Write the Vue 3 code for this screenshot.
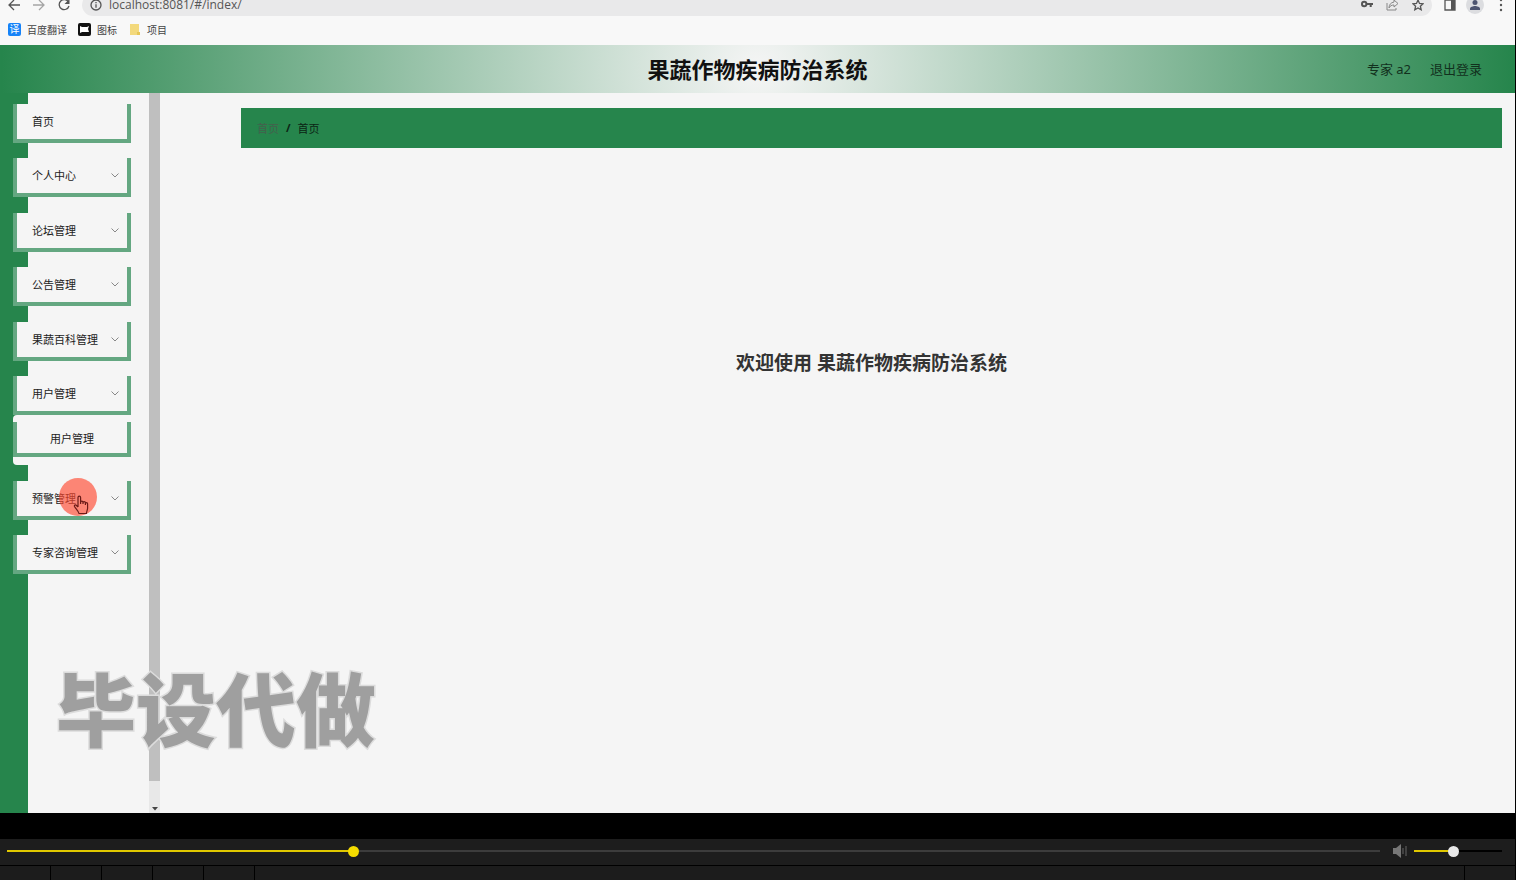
<template>
  <div class="screen">
    <div class="browser">
      <div class="toolbar">
        <button class="tool" aria-label="Back">
          <svg width="14" height="14" viewBox="0 0 14 14"><path d="M13 7H2M7 2L2 7l5 5" /></svg>
        </button>
        <button class="tool faded" aria-label="Forward">
          <svg width="14" height="14" viewBox="0 0 14 14"><path d="M1 7h11M7 2l5 5-5 5" /></svg>
        </button>
        <button class="tool" aria-label="Reload">
          <svg width="14" height="14" viewBox="0 0 14 14">
            <path d="M11.6 4.2A5 5 0 1 0 12 8" />
            <path class="fill" d="M12.5 1v5h-5z" />
          </svg>
        </button>
        <div class="address">
          <svg width="12" height="12" viewBox="0 0 12 12">
            <circle cx="6" cy="6" r="5" />
            <path d="M6 5.2v3.6M6 3v1.2" />
          </svg>
          <input v-model="url" type="text" aria-label="Address" />
          <svg width="12" height="12" viewBox="0 0 12 12">
            <circle class="thick" cx="3.2" cy="5" r="2.2" />
            <path class="thick" d="M5.5 5H12M9.7 5v3" />
          </svg>
          <svg class="light" width="13" height="12" viewBox="0 0 13 12">
            <path d="M1 4v7h9V9M8 1l4 3.5L8 8V6C5.5 6 4 7 3 9c0-3.5 2-5.5 5-6z" />
          </svg>
          <svg width="12" height="12" viewBox="0 0 12 12">
            <path d="M6 1l1.5 3.4 3.6.4-2.7 2.4.8 3.6L6 9l-3.2 1.8.8-3.6L.9 4.8l3.6-.4z" />
          </svg>
        </div>
        <div class="tool-end">
          <button class="tool" aria-label="Side panel">
            <svg width="12" height="12" viewBox="0 0 12 12">
              <path d="M1 1h10v10H1z" />
              <path class="fill" d="M7 1h4v10H7z" />
            </svg>
          </button>
          <button class="tool profile" aria-label="Profile">
            <svg width="12" height="12" viewBox="0 0 12 12">
              <circle class="fill" cx="6" cy="3.5" r="2.5" />
              <path class="fill" d="M1 11V9.5C1 8 4 7 6 7s5 1 5 2.5V11z" />
            </svg>
          </button>
          <button class="tool" aria-label="More">
            <svg width="14" height="14" viewBox="0 0 14 14">
              <circle class="fill" cx="7" cy="2" r="1.2" />
              <circle class="fill" cx="7" cy="7" r="1.2" />
              <circle class="fill" cx="7" cy="12" r="1.2" />
            </svg>
          </button>
        </div>
      </div>
      <div class="bookmarks">
        <a href="#"><span class="translate">译</span>百度翻译</a>
        <a href="#">
          <svg width="13" height="13" viewBox="0 0 13 13">
            <rect width="13" height="13" rx="2" fill="#111" />
            <path d="M2 3l2 1h5l2-1-1 3 1 3H4l-2 1z" fill="#fff" />
          </svg>图标
        </a>
        <a href="#">
          <svg width="13" height="13" viewBox="0 0 13 13">
            <path d="M2 1h9v8l1 3H2z" fill="#f3d97c" />
            <path d="M9 9h3v3H9z" fill="#e6c658" />
          </svg>项目
        </a>
      </div>
    </div>

    <div class="page">
      <header class="header">
        <h1>果蔬作物疾病防治系统</h1>
        <div class="user">
          <span>专家 a2</span>
          <button>退出登录</button>
        </div>
      </header>
      <div class="body">
        <nav class="sidebar">
          <ul class="menu">
            <li v-for="item in menus" :key="item.name">
              <button class="menu-item">
                {{ item.name }}
                <svg v-if="item.arrow" width="8" height="5" viewBox="0 0 8 5">
                  <path d="M.5.5L4 4 7.5.5" />
                </svg>
              </button>
              <div v-if="item.children" class="submenu">
                <a v-for="child in item.children" :key="child" href="#" class="submenu-item">{{ child }}</a>
              </div>
              <div v-if="item.hover" class="pointer">
                <svg width="16" height="20" viewBox="0 0 16 20">
                  <path d="M5 12V2.5a1.3 1.3 0 0 1 2.6 0V8M7.6 9V7.300a1.2 1.2 0 0 1 2.4 0V9M10 9V7.800a1.2 1.2 0 0 1 2.4 0V10M12.4 10V8.800a1.1 1.1 0 0 1 2.2 0V13c0 2-1 3-1.2 5.5H6C5.5 16 3 14 1.5 11.5 1 10 2.5 9.5 3.5 10.5L5 12" />
                </svg>
              </div>
            </li>
          </ul>
        </nav>
        <div class="scrollbar">
          <div class="thumb"></div>
          <svg width="6" height="4" viewBox="0 0 6 4"><path d="M0 0h6L3 3.5z" fill="#444" /></svg>
        </div>
        <main class="main">
          <div class="breadcrumb">
            <a href="#">首页</a>
            <b>/</b>
            <span>首页</span>
          </div>
          <h2>欢迎使用 果蔬作物疾病防治系统</h2>
        </main>
      </div>
      <div class="watermark">毕设代做</div>
    </div>

    <div class="player">
      <div class="controls">
        <input
          v-model="progress"
          class="seek"
          type="range"
          min="0"
          max="1000"
          aria-label="Progress"
          :style="{ '--value': progress / 10 + '%' }"
        />
        <svg width="16" height="14" viewBox="0 0 16 14">
          <path d="M1 4h3l5-4v14l-5-4H1z" fill="#777" />
          <path d="M11 4v6M14 2v10" stroke="#666" />
        </svg>
        <input
          v-model="volume"
          class="volume"
          type="range"
          min="0"
          max="100"
          aria-label="Volume"
          :style="{ '--value': volume + '%' }"
        />
      </div>
      <div class="cells">
        <span v-for="n in 5" :key="n" class="cell"></span>
        <span class="cell wide"></span>
        <span class="cell"></span>
      </div>
    </div>
  </div>
</template>

<script setup>
import { ref } from 'vue';

const url = ref('localhost:8081/#/index/');
const progress = ref(250);
const volume = ref(44);

const menus = ref([
  { name: '首页' },
  { name: '个人中心', arrow: true },
  { name: '论坛管理', arrow: true },
  { name: '公告管理', arrow: true },
  { name: '果蔬百科管理', arrow: true },
  { name: '用户管理', arrow: true, children: ['用户管理'] },
  { name: '预警管理', arrow: true, hover: true },
  { name: '专家咨询管理', arrow: true },
]);
</script>

<style>
body {
  margin: 0;
  background: #000;
}
</style>

<style scoped>
.screen {
  display: flex;
  flex-direction: column;
  min-height: 100vh;
  overflow: hidden;
  font-family: "Noto Sans", "Noto Sans CJK SC", sans-serif;
  font-size: 11px;
  color: #222;
}

.screen * {
  box-sizing: border-box;
}

svg {
  display: block;
  flex: none;
}

button {
  border: 0;
  padding: 0;
  background: none;
  font: inherit;
  color: inherit;
  cursor: pointer;
}

a {
  color: inherit;
  text-decoration: none;
}

.browser {
  background: #f8f8f8;
  margin-right: 1px;
}

.toolbar {
  display: flex;
  align-items: center;
  height: 22px;
  margin-top: -6px;
  padding: 0 7px;
}

.toolbar svg {
  fill: none;
  stroke: #555;
  stroke-width: 1.3;
}

.toolbar .fill {
  fill: #555;
  stroke: none;
}

.toolbar .thick {
  stroke-width: 2;
}

.toolbar .light {
  stroke: #888;
  stroke-width: 1;
}

.tool {
  margin-right: 11px;
}

.faded {
  opacity: 0.5;
}

.address {
  flex: 1;
  display: flex;
  align-items: center;
  gap: 13px;
  height: 22px;
  padding: 0 8px;
  border-radius: 11px;
  background: #e9e9ea;
}

.address input {
  flex: 1;
  min-width: 0;
  height: 18px;
  margin-left: -6px;
  border: 0;
  padding: 0 0 2px;
  outline: none;
  background: none;
  font: 12px "Open Sans", sans-serif;
  color: #555;
}

.tool-end {
  display: flex;
  align-items: center;
  gap: 10px;
  margin-left: 12px;
}

.tool-end .tool {
  margin: 0;
}

.profile {
  display: flex;
  align-items: center;
  justify-content: center;
  width: 18px;
  height: 18px;
  border-radius: 50%;
  background: #dcdde0;
}

.profile .fill {
  fill: #4e5570;
}

.bookmarks {
  display: flex;
  align-items: center;
  gap: 11px;
  height: 29px;
  padding: 0 0 2px 8px;
  font-size: 10px;
  color: #444;
}

.bookmarks a {
  display: flex;
  align-items: center;
  gap: 6px;
}

.translate {
  width: 13px;
  border-radius: 2px;
  background: #1683f8;
  color: #fff;
  line-height: 13px;
  text-align: center;
}

.page {
  position: relative;
  flex: 1;
  display: flex;
  flex-direction: column;
  margin-right: 1px;
  background: #f5f5f5;
}

.header {
  display: grid;
  grid-template-columns: 1fr auto 1fr;
  align-items: center;
  height: 48px;
  padding: 0 33px;
  background: radial-gradient(circle 756px, #f5f5f5, #26854c);
}

.header h1 {
  grid-column: 2;
  margin: 0;
  font-size: 22px;
  line-height: 32px;
  color: #111;
}

.user {
  display: flex;
  justify-content: flex-end;
  gap: 19px;
  padding-bottom: 2px;
  font-size: 13px;
  color: #12301d;
}

.body {
  flex: 1;
  display: flex;
}

.sidebar {
  width: 149px;
  padding: 11px 18px 0 13px;
  background: linear-gradient(to right, #26854c 28px, #f5f5f5 28px);
}

.menu {
  list-style: none;
  margin: 0;
  padding: 0;
}

.menu li {
  position: relative;
  margin-bottom: 15px;
}

.menu li:nth-child(even) {
  margin-bottom: 16px;
}

.menu-item,
.submenu-item {
  display: flex;
  align-items: center;
  width: 100%;
  border: 4px solid #64a781;
  border-top: 0;
  background: #f5f5f5;
}

.menu-item {
  justify-content: space-between;
  height: 39px;
  padding: 0 8px 1px 15px;
}

.menu-item svg {
  fill: none;
  stroke: #888;
}

.submenu {
  padding: 7px 0 8px;
  border-radius: 4px 0 0 4px;
  background: #f5f5f5;
}

.submenu-item {
  justify-content: center;
  height: 36px;
}

.submenu-item:last-child {
  height: 35px;
}

.pointer {
  position: absolute;
  top: -3px;
  left: 46px;
  width: 38px;
  height: 38px;
  padding: 17px 0 0 14px;
  border-radius: 50%;
  background: rgba(255, 72, 48, 0.65);
  pointer-events: none;
}

.pointer svg {
  fill: none;
  stroke: #6b1b18;
  stroke-width: 1.2;
}

.scrollbar {
  display: flex;
  flex-direction: column;
  align-items: center;
  width: 11px;
  padding-bottom: 2px;
  background: #e8e8e8;
}

.thumb {
  flex: 1;
  width: 100%;
  margin-bottom: 26px;
  background: #bfbfbf;
}

.main {
  flex: 1;
  padding: 15px 13px 0 81px;
}

.breadcrumb {
  display: flex;
  align-items: center;
  gap: 7px;
  height: 40px;
  padding: 0 16px 1px;
  background: #26854c;
  color: #0c2414;
}

.breadcrumb a {
  color: #44604d;
}

.main h2 {
  margin: 200px 0 0;
  font-size: 19px;
  line-height: 30px;
  text-align: center;
  color: #333;
}

.watermark {
  position: absolute;
  left: 56px;
  bottom: 54px;
  font-size: 80px;
  font-weight: 900;
  line-height: 100px;
  color: #9f9f9f;
  -webkit-text-stroke: 3px #dcdcdc;
  paint-order: stroke fill;
  pointer-events: none;
}

.player {
  padding: 26px 1px 0 0;
  background: #000;
}

.controls {
  display: flex;
  align-items: center;
  height: 26px;
  padding: 0 13px 2px 7px;
  background: #1d1d1d;
}

.controls svg {
  margin: 0 6px 0 12px;
}

.controls input {
  appearance: none;
  min-width: 0;
  height: 12px;
  margin: 0;
  background: linear-gradient(to right, #e0c800 var(--value), var(--rail) var(--value)) center / 100% 2px no-repeat;
}

.controls .seek {
  --rail: #3c3c3c;
  --knob: #f5dc00;
  flex: 1;
}

.controls .volume {
  --rail: #000;
  --knob: #e8e8e8;
  width: 88px;
}

.controls input::-webkit-slider-thumb {
  appearance: none;
  width: 11px;
  height: 11px;
  border-radius: 50%;
  background: var(--knob);
}

.cells {
  display: flex;
  gap: 1px;
  height: 15px;
  padding-top: 1px;
}

.cell {
  width: 50px;
  background: #1c1c1c;
}

.cell.wide {
  flex: 1;
}
</style>
